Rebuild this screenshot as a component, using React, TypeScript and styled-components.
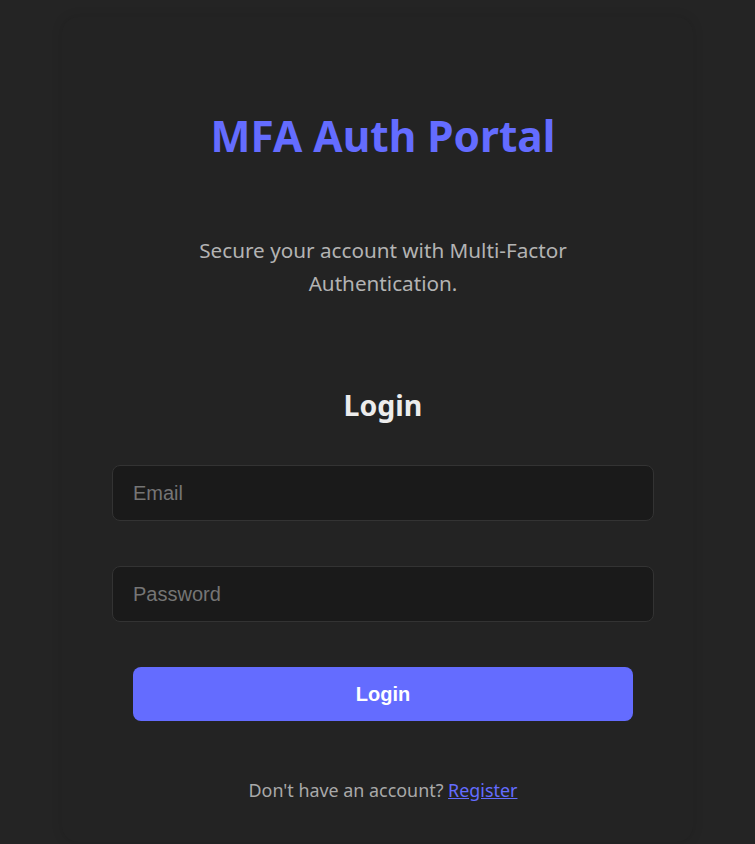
import React from "react";
import styled, { createGlobalStyle } from "styled-components";

const Global = createGlobalStyle`
  html, body { margin: 0; padding: 0; background: #242424; }
  body { font-family: "Noto Sans", "Open Sans", sans-serif; color: rgba(255,255,255,0.87); }
  * { box-sizing: border-box; }
`;

const Page = styled.div`
  min-height: 100vh;
  display: flex;
  justify-content: center;
  align-items: flex-start;
  background: #242424;
`;

const Card = styled.main`
  width: 631px;
  margin-top: 17px;
  padding: 0 39px 40px 50px;
  border-radius: 16px;
  background: #232323;
  box-shadow: 0 0 12px rgba(0, 0, 0, 0.12);
  display: flex;
  flex-direction: column;
  align-items: center;
  text-align: center;
`;

const Title = styled.h1`
  margin: 92px 0 0;
  font-size: 42.4px;
  line-height: 53px;
  font-weight: 700;
  color: #646cff;
`;

const Subtitle = styled.p`
  margin: 72px 0 0;
  width: 420px;
  font-size: 20.7px;
  line-height: 33px;
  color: #b3b3b3;
`;

const Heading = styled.h2`
  margin: 88px 0 0;
  font-size: 28.5px;
  line-height: 34px;
  font-weight: 700;
  color: #ececec;
`;

const Form = styled.form`
  width: 100%;
  margin-top: 43px;
  display: flex;
  flex-direction: column;
  align-items: center;
  gap: 45px;
`;

const Input = styled.input`
  width: 100%;
  height: 56px;
  padding: 0 20px;
  border: 1px solid #333;
  border-radius: 8px;
  background: #1a1a1a;
  color: #e6e6e6;
  font-family: "Liberation Sans", Arial, sans-serif;
  font-size: 20px;
  outline: none;
  &::placeholder { color: #757575; }
`;

const Button = styled.button`
  width: 500px;
  height: 54px;
  border: none;
  border-radius: 8px;
  background: #646cff;
  color: #fff;
  font-family: "Liberation Sans", Arial, sans-serif;
  font-size: 20px;
  font-weight: 700;
  cursor: pointer;
`;

const Footer = styled.p`
  margin: 57px 0 0;
  font-size: 17.9px;
  line-height: 24px;
  color: #a9a9a9;
`;

const Link = styled.a`
  color: #646cff;
  text-decoration: underline;
`;

export default function App() {
  return (
    <>
      <Global />
      <Page>
        <Card>
          <Title>MFA Auth Portal</Title>
          <Subtitle>Secure your account with Multi-Factor Authentication.</Subtitle>
          <Heading>Login</Heading>
          <Form onSubmit={(e) => e.preventDefault()}>
            <Input type="email" placeholder="Email" />
            <Input type="password" placeholder="Password" />
            <Button type="submit">Login</Button>
          </Form>
          <Footer>
            Don't have an account? <Link href="#">Register</Link>
          </Footer>
        </Card>
      </Page>
    </>
  );
}
